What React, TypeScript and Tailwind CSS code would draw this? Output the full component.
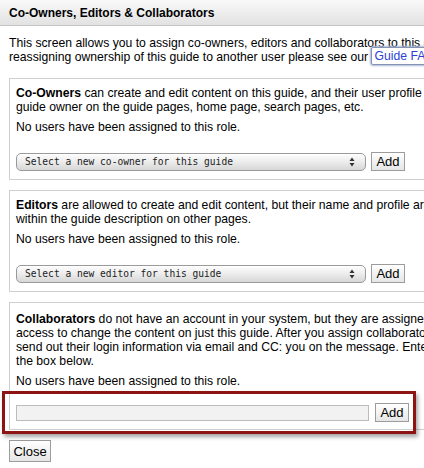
const font = { fontFamily: '"Liberation Sans", Arial, sans-serif' };

function SelectBox({ label }: { label: string }) {
  return (
    <div className="flex items-center gap-[5px]">
      <div className="flex h-[18px] w-[350px] items-center justify-between rounded-[5px] border border-[#9a9a9a] bg-gradient-to-b from-[#fdfdfd] via-[#ececec] to-[#d6d6d6] pl-[8px] pr-[6px] shadow-[inset_0_1px_0_#fff]">
        <span className="font-['DejaVu_Sans_Mono',monospace] text-[9.6px] text-[#222]">{label}</span>
        <svg width="6" height="10" viewBox="0 0 6 10" className="mr-[4px]">
          <path d="M3 0.5 L5.5 4 H0.5 Z" fill="#333" />
          <path d="M3 9.5 L5.5 6 H0.5 Z" fill="#333" />
        </svg>
      </div>
      <AddButton />
    </div>
  );
}

function AddButton() {
  return (
    <button className="h-[19px] w-[34px] border border-[#9c9c9c] bg-gradient-to-b from-white to-[#e6e6e6] text-[13px] leading-none text-black">
      Add
    </button>
  );
}

export default function App() {
  return (
    <div className="relative h-[468px] w-[424px] overflow-hidden bg-white text-[12.2px] leading-[14px] text-black" style={font}>
      <div className="flex h-[26px] w-[560px] items-center border-b border-[#c4c4c4] bg-gradient-to-b from-[#f9f9f9] to-[#e2e2e2] px-[9px] text-[12px] font-bold">
        Co-Owners, Editors &amp; Collaborators
      </div>

      <div className="w-[560px] px-[9px] pt-[10px]">
        <p className="whitespace-nowrap">
          This screen allows you to assign co-owners, editors and collaborators to this guide. If you are
          <br />
          reassigning ownership of this guide to another user please see our{' '}
          <span className="relative -top-px rounded-[2px] border border-[#8593b5] px-[2px] py-[1px] text-[#2b3fd6] shadow-[0_0_2px_1px_#aab6d6]">
            Guide FAQ
          </span>
        </p>

        <div className="mt-[14px] border border-[#cfcfcf] px-[6px] pb-[8px] pt-[7px]">
          <p className="whitespace-nowrap">
            <b>Co-Owners</b> can create and edit content on this guide, and their user profile appears as a
            <br />
            guide owner on the guide pages, home page, search pages, etc.
          </p>
          <p className="mt-[6px]">No users have been assigned to this role.</p>
          <div className="mt-[18px]">
            <SelectBox label="Select a new co-owner for this guide" />
          </div>
        </div>

        <div className="mt-[10px] border border-[#cfcfcf] px-[6px] pb-[8px] pt-[7px]">
          <p className="whitespace-nowrap">
            <b>Editors</b> are allowed to create and edit content, but their name and profile are not displayed
            <br />
            within the guide description on other pages.
          </p>
          <p className="mt-[6px]">No users have been assigned to this role.</p>
          <div className="mt-[18px]">
            <SelectBox label="Select a new editor for this guide" />
          </div>
        </div>

        <div className="mt-[10px] border border-[#cfcfcf] px-[6px] pb-[7px] pt-[9px]">
          <p className="whitespace-nowrap">
            <b>Collaborators</b> do not have an account in your system, but they are assigned a password to have
            <br />
            access to change the content on just this guide. After you assign collaborators, we will
            <br />
            send out their login information via email and CC: you on the message. Enter their email in
            <br />
            the box below.
          </p>
          <p className="mt-[6px]">No users have been assigned to this role.</p>
          <div className="mt-[15px] flex items-center gap-[6px]">
            <div className="h-[16px] w-[353px] border border-[#bcbcbc] bg-[#f2f2f2]" />
            <AddButton />
          </div>
        </div>

        <div className="mt-[10px]">
          <button className="h-[22px] w-[42px] border border-[#9c9c9c] bg-gradient-to-b from-white to-[#e6e6e6] text-[13px] leading-none text-black">
            Close
          </button>
        </div>
      </div>

      <div className="absolute left-[2px] top-[391px] h-[43px] w-[414px] border-[3px] border-[#8e1414] shadow-[2px_3px_4px_rgba(0,0,0,0.35)]" />
    </div>
  );
}
